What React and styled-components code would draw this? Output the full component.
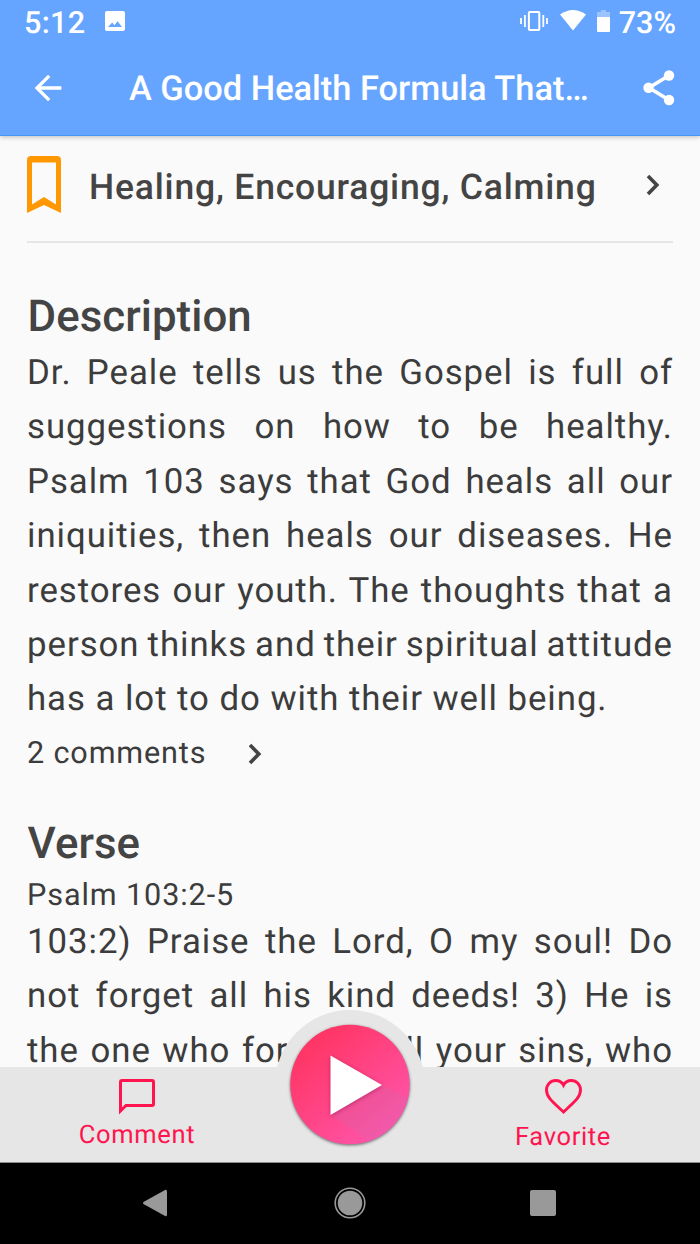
import React from "react";
import styled, { createGlobalStyle } from "styled-components";

const Global = createGlobalStyle`
  * { box-sizing: border-box; }
  body { margin: 0; font-family: Roboto, "Liberation Sans", sans-serif; color: #3c3c3c; background: #fafafa; text-rendering: geometricPrecision; }
  h1, h2, p { margin: 0; }
`;

const Screen = styled.div`
  width: 700px;
  height: 1244px;
  display: flex;
  flex-direction: column;
  overflow: hidden;
  background: #fafafa;
`;

const Header = styled.header`
  flex: none;
  height: 136px;
  background: #66a5ff;
  border-bottom: 1px solid #4596f8;
  box-shadow: 0 1px 5px rgba(0, 0, 0, 0.25);
  color: #fff;
  z-index: 1;
`;

const StatusBar = styled.div`
  height: 44px;
  padding: 0 24px 0 24px;
  display: flex;
  align-items: center;
  font-size: 30.6px;
  font-weight: 500;
  line-height: 44px;
`;

const StatusIcons = styled.div`
  display: flex;
  align-items: center;
  margin: -3px 0 0 auto;
`;

const Clock = styled.span`
  letter-spacing: 0.3px;
  margin-right: 20px;
  padding-top: 3px;
`;

const Battery = styled.span`
  margin-left: 9px;
  padding-top: 6px;
`;

const PhotoBadge = styled.svg`
  margin-top: -3px;
`;

const TitleBar = styled.div`
  height: 91px;
  padding: 0 25px 4px 28px;
  display: flex;
  align-items: center;
`;

const Title = styled.h1`
  flex: 1;
  margin-left: 61px;
  padding-top: 2px;
  font-size: 34.4px;
  font-weight: 500;
  line-height: 40px;
  white-space: nowrap;
`;

const Content = styled.main`
  flex: none;
  height: 931px;
  padding: 0 27px;
  overflow: hidden;
`;

const TopicRow = styled.div`
  height: 107px;
  display: flex;
  align-items: flex-start;
  padding-top: 20px;
  border-bottom: 2px solid #e6e6e6;
`;

const Topics = styled.span`
  flex: 1;
  margin: 10px 0 0 28px;
  font-size: 35.5px;
  font-weight: 500;
  letter-spacing: 0.8px;
  line-height: 42px;
  color: #444;
  white-space: nowrap;
`;

const TopicChevron = styled.span`
  display: flex;
  margin: 18px 13px 0 0;
`;

const Heading = styled.h2`
  margin-top: ${(p) => p.$gap}px;
  padding-left: 0.5px;
  font-size: 43.8px;
  font-weight: 500;
  line-height: 50px;
  letter-spacing: 0.05px;
  color: #444;
`;

const Passage = styled.p`
  margin-top: ${(p) => p.$gap}px;
  font-size: 34.8px;
  line-height: 54.4px;
  letter-spacing: 0.95px;
`;

const Line = styled.span`
  display: block;
  white-space: nowrap;
  text-align: justify;
  text-align-last: ${(p) => (p.$last ? "left" : "justify")};
  word-spacing: ${(p) => p.$tight || 0}px;
`;

const CommentsLink = styled.div`
  display: flex;
  align-items: center;
  gap: 42px;
  height: 54px;
  font-size: 30.6px;
  letter-spacing: 0.85px;
`;

const Reference = styled.p`
  margin-top: 10px;
  font-size: 30.6px;
  line-height: 36px;
  letter-spacing: 0.9px;
`;

const BottomBar = styled.footer`
  position: relative;
  z-index: 2;
  flex: none;
  height: 96px;
  display: flex;
  justify-content: space-between;
  background: #e6e6e6;
  border-bottom: 1px solid #8c8c8c;
  color: #ff1450;
`;

const Tab = styled.div`
  width: 274px;
  padding-top: ${(p) => p.$top}px;
  display: flex;
  flex-direction: column;
  align-items: center;
  font-size: 25.5px;
  line-height: 30px;
  letter-spacing: 0.65px;
  gap: ${(p) => p.$gap}px;
`;

const PlayHolder = styled.div`
  position: absolute;
  left: 275px;
  top: -57.5px;
  width: 150px;
  height: 150px;
  border-radius: 50%;
  background: #e6e6e6;
  display: flex;
  align-items: center;
  justify-content: center;
`;

const NavBar = styled.nav`
  flex: 1;
  background: #000;
  display: flex;
  align-items: center;
  justify-content: space-between;
  padding: 0 144px 1px 142px;
`;

const HomeButton = styled.svg`
  margin-left: 2px;
`;

const Chevron = () => (
  <svg width="14" height="22" viewBox="0 0 14 22" fill="none" stroke="#444" strokeWidth="3.6">
    <path d="M2 2 L10.8 11 L2 20" />
  </svg>
);

const description = [
  ["Dr. Peale tells us the Gospel is full of"],
  ["suggestions on how to be healthy."],
  ["Psalm 103 says that God heals all our"],
  ["iniquities, then heals our diseases. He"],
  ["restores our youth. The thoughts that a"],
  ["person thinks and their spiritual attitude", -3],
  ["has a lot to do with their well being."],
];

const verse = [
  "103:2) Praise the Lord, O my soul! Do",
  "not forget all his kind deeds! 3) He is",
  "the one who forgives all your sins, who",
];

export default function App() {
  return (
    <Screen>
      <Global />
      <Header>
        <StatusBar>
          <Clock>5:12</Clock>
          <PhotoBadge width="20" height="20" viewBox="0 0 20 20">
            <path fill="#fff" fillRule="evenodd" d="M2 0H18Q20 0 20 2V18Q20 20 18 20H2Q0 20 0 18V2Q0 0 2 0ZM3 16H17L12.6 10.2L9.4 14.2L7.2 11.6Z" />
          </PhotoBadge>
          <StatusIcons>
            <svg width="28" height="20" viewBox="0 0 28 20" fill="none" stroke="#fff" strokeWidth="1.8">
              <rect x="8.9" y="1" width="10.4" height="18" rx="1" strokeWidth="2" />
              <path d="M1 7V13M4.9 4V16M23.3 4V16M27 7V13" />
            </svg>
            <svg width="26" height="21" viewBox="0 0 26 21" style={{ marginLeft: 12 }}>
              <path fill="#fff" d="M0 4.5Q13 -4.5 26 4.5L13 20.5Z" />
            </svg>
            <svg width="13" height="22" viewBox="0 0 13 22" style={{ marginLeft: 11 }}>
              <path fill="#fff" opacity=".35" d="M0 7V3Q0 2 1 2H4V0H9V2H12Q13 2 13 3V7Z" />
              <path fill="#fff" d="M0 7H13V21Q13 22 12 22H1Q0 22 0 21Z" />
            </svg>
            <Battery>73%</Battery>
          </StatusIcons>
        </StatusBar>
        <TitleBar>
          <svg width="40" height="40" viewBox="0 0 24 24">
            <path fill="#fff" d="M20 11H7.83l5.59-5.59L12 4l-8 8 8 8 1.41-1.41L7.83 13H20v-2z" />
          </svg>
          <Title>A Good Health Formula That…</Title>
          <svg width="32" height="36" viewBox="0 0 32 36">
            <path d="M26 5.5L6 17.8L26 30" fill="none" stroke="#fff" strokeWidth="3.6" />
            <circle cx="26" cy="5.5" r="5.2" fill="#fff" />
            <circle cx="5.5" cy="17.8" r="5.2" fill="#fff" />
            <circle cx="26" cy="30" r="5.2" fill="#fff" />
          </svg>
        </TitleBar>
      </Header>
      <Content>
        <TopicRow>
          <svg width="34" height="57" viewBox="0 0 34 57">
            <path fill="#ff9800" fillRule="evenodd" d="M4 0H30Q34 0 34 4V57L17 49L0 57V4Q0 0 4 0ZM5 6.5V48.5L17 41L29 48.5V6.5Z" />
          </svg>
          <Topics>Healing, Encouraging, Calming</Topics>
          <TopicChevron><Chevron /></TopicChevron>
        </TopicRow>
        <Heading $gap={48}>Description</Heading>
        <Passage $gap={5}>
          {description.map(([text, tight], i) => (
            <Line key={text} $tight={tight} $last={i === description.length - 1}>{text}</Line>
          ))}
        </Passage>
        <CommentsLink>
          2 comments
          <Chevron />
        </CommentsLink>
        <Heading $gap={37}>Verse</Heading>
        <Reference>Psalm 103:2-5</Reference>
        <Passage $gap={1}>
          {verse.map((text) => (
            <Line key={text}>{text}</Line>
          ))}
        </Passage>
      </Content>
      <BottomBar>
        <Tab $top={12} $gap={5}>
          <svg width="36" height="36" viewBox="0 0 36 36" fill="none" stroke="currentColor" strokeWidth="3">
            <path d="M1.5 31V3Q1.5 1.5 3 1.5H33Q34.5 1.5 34.5 3V25Q34.5 26.5 33 26.5H7L1.5 32Z" />
          </svg>
          Comment
        </Tab>
        <PlayHolder>
          <svg width="130" height="130" viewBox="0 0 130 130">
            <defs>
              <linearGradient id="pink" x1="0.15" y1="0.15" x2="0.8" y2="0.9">
                <stop offset="0" stopColor="#ff3564" />
                <stop offset="1" stopColor="#ff54a8" />
              </linearGradient>
              <clipPath id="disc"><circle cx="65" cy="65" r="59.7" /></clipPath>
            </defs>
            <circle cx="65" cy="64.5" r="59.7" fill="url(#pink)" style={{ filter: "drop-shadow(0 1px 1.5px rgba(0,0,0,.55))" }} />
            <path d="M97 65L140 87V130H100L45 95Z" fill="#c86cae" opacity=".25" clipPath="url(#disc)" />
            <path d="M45.5 35.5L97 65L45.5 95Z" fill="#fff" style={{ filter: "drop-shadow(0 1px 2px rgba(120,0,60,.45))" }} />
          </svg>
        </PlayHolder>
        <Tab $top={12} $gap={8}>
          <svg width="37" height="35" viewBox="0 0 37 35" fill="none" stroke="currentColor" strokeWidth="2.9">
            <path d="M18.5 33L15 29.8C6 21.6 1.5 17.4 1.5 11C1.5 5.6 5.6 1.5 10.7 1.5C14 1.5 17 3.2 18.5 6.2C20 3.2 23 1.5 26.3 1.5C31.4 1.5 35.5 5.6 35.5 11C35.5 17.4 31 21.6 22 29.8Z" />
          </svg>
          Favorite
        </Tab>
      </BottomBar>
      <NavBar>
        <svg width="25" height="28" viewBox="0 0 26 28">
          <path fill="#999" d="M24 .5Q26 -.5 26 2V26Q26 28.5 24 27.5L2 15.3Q0 14 2 12.7Z" />
        </svg>
        <HomeButton width="32" height="32" viewBox="0 0 32 32">
          <circle cx="16" cy="16" r="14.8" fill="none" stroke="#999" strokeWidth="1.6" />
          <circle cx="16" cy="16" r="12.3" fill="#999" />
        </HomeButton>
        <svg width="26" height="26" viewBox="0 0 26 26">
          <rect width="26" height="26" rx="2" fill="#999" />
        </svg>
      </NavBar>
    </Screen>
  );
}
